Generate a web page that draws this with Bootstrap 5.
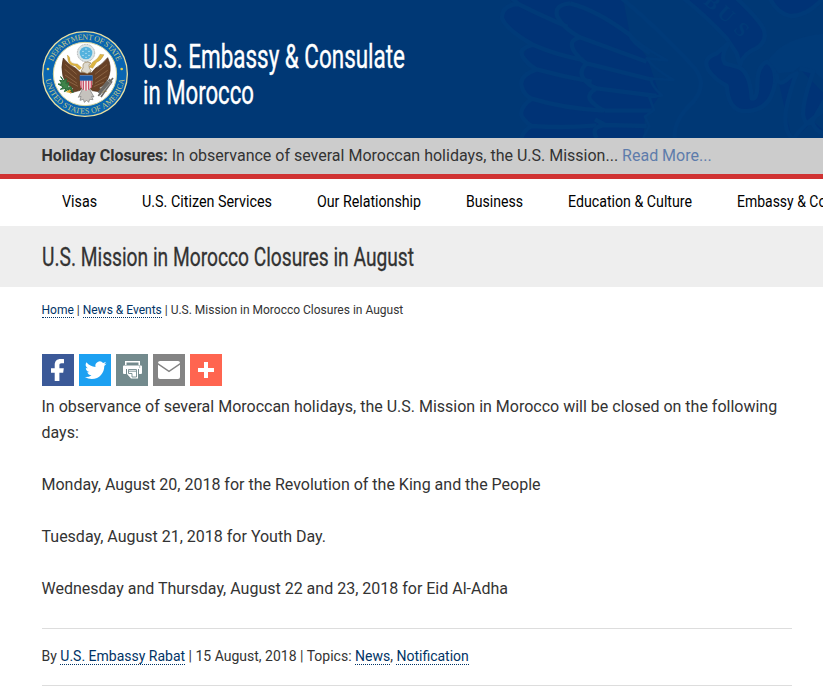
<!DOCTYPE html>
<html lang="en">
<head>
  <meta charset="UTF-8">
  <meta name="viewport" content="width=device-width, initial-scale=1.0">
  <title>U.S. Mission in Morocco Closures in August</title>
  <link rel="stylesheet" href="https://cdn.jsdelivr.net/npm/bootstrap@5.3.0/dist/css/bootstrap.min.css">
  <style>
    body { font-family: Roboto, "Liberation Sans", sans-serif; font-size: 16px; line-height: 26px; color: #333; overflow: hidden; }
    a { color: #036; text-decoration: none; }
    .page-pad { padding-left: 41.5px; padding-right: 31px; }
    .site-header { height: 138px; background: #003875; }
    .crest { right: 0; top: 0; }
    .seal { width: 86px; height: 86px; margin: 10px 14.5px 0 .5px; }
    .site-name { font-size: 33px; line-height: 36px; color: #fff; padding-top: 12px; -webkit-text-stroke: .4px #fff; }
    .fit { display: inline-block; white-space: nowrap; }
    .fit > span { display: inline-block; transform-origin: 0 50%; }
    .alert-bar { height: 41px; background: #ccc; border-bottom: 5px solid #d03232; line-height: 35px; }
    .alert-bar a { color: #5e7cab; }
    .main-menu { height: 47px; padding-left: 61.5px; gap: 45px; line-height: 46px; }
    .main-menu a { color: #000; }
    .title-bar { height: 61px; background: #eee; }
    .title-bar h1 { font-size: 26px; line-height: 63px; font-weight: 400; -webkit-text-stroke: .3px #333; }
    .crumbs { font-size: 12px; line-height: 15px; padding-top: 16px; }
    .dotted { border-bottom: 1px dotted #036; }
    .share { gap: 5px; margin: 36px 0 8px .5px; }
    .share svg { width: 32px; height: 32px; display: block; }
    .article p { margin-bottom: 26px; }
    .byline { font-size: 14px; line-height: 16px; height: 58px; border-top: 1px solid #ddd; border-bottom: 1px solid #ddd; padding-top: 19px; }
  </style>
</head>
<body>
  <header class="site-header page-pad position-relative d-flex align-items-center">
    <svg class="crest position-absolute" width="343" height="138" viewBox="0 0 1029 414" aria-hidden="true">
      <g fill="#003376" stroke="#003a78" stroke-width="13" stroke-linejoin="round">
        <path stroke="none" d="M90 0H430L450 105L500 170L540 285L495 350L490 414H125Q130 390 155 378Q90 350 150 300Q95 250 165 208Q100 165 160 135Q90 90 66 55Q60 20 105 12Z"/>
        <path d="M90 -10L115 12Q65 15 66 55Q80 90 160 135Q112 145 128 170Q145 195 170 208Q120 225 124 255Q130 285 155 296Q115 325 126 350Q140 370 155 378Q130 390 122 420M115 12Q180 45 262 80M160 135Q230 165 310 180M170 208Q250 230 335 245M155 296Q250 325 370 332M155 378Q250 385 350 376" fill="none"/>
        <path d="M270 10Q220 15 232 50Q250 85 300 112Q265 120 280 150Q300 180 320 190Q295 215 310 235Q330 260 350 265Q315 285 335 305Q355 325 375 332M345 358L375 375Q330 380 350 414M270 10Q350 30 450 105Q460 130 510 160M300 112L500 185M320 190L520 240M350 265L530 288M375 332L515 332M375 375L500 378" fill="none"/>
        <path d="M445 95Q465 130 562 181L500 175Q520 205 580 240L512 236Q515 260 546 286L508 292L522 330L495 350L508 378L490 414" fill="none" stroke-width="8"/>
        <path d="M420 -10Q540 90 640 200Q685 250 640 305Q580 360 584 414" fill="none"/>
        <path d="M605 -10Q680 50 740 115L770 160L780 195Q790 160 830 145Q865 120 850 85Q830 50 765 -10"/>
        <path d="M745 130L710 160Q665 175 685 210Q700 235 740 258Q745 325 785 333Q870 340 885 250Q890 200 860 185Q830 200 832 260Q830 300 815 295Q810 210 770 200L735 190Q720 170 745 130Z"/>
        <path d="M867 -10Q890 40 930 48Q980 50 1029 -5V-10Z"/>
        <path d="M1040 100Q910 110 865 180L895 220L940 215L958 200L1000 212L1040 250Z" fill="#003a78" stroke="none"/>
        <path d="M890 220Q890 270 930 230L950 220Q930 270 918 330Q910 390 935 414M958 205L1000 215Q965 310 970 350Q980 385 1000 360L1040 290M1040 325Q960 380 940 420M995 360Q1005 400 1040 400"/>
      </g>
      <g fill="#003a78" font-family="Liberation Serif, serif" font-size="62" font-weight="bold">
        <text transform="translate(668 8) rotate(40)">B</text>
        <text transform="translate(708 43) rotate(42)">U</text>
        <text transform="translate(758 90) rotate(46)">S</text>
      </g>
    </svg>
    <svg class="seal position-relative flex-shrink-0" viewBox="36 33 258 258" role="img" aria-label="Department of State seal">
      <defs>
        <path id="arcTop" d="M62 162A103 103 0 0 1 268 162"/>
        <path id="arcBottom" d="M46 162A119 119 0 0 0 284 162"/>
      </defs>
      <circle cx="165" cy="162" r="127" fill="#0965b1" stroke="#e9dfa0" stroke-width="4"/>
      <circle cx="165" cy="162" r="95" fill="#fff" stroke="#d5d39c" stroke-width="3"/>
      <g fill="#c8ca87" font-family="Liberation Serif, serif" font-size="24" text-anchor="middle">
        <text><textPath href="#arcTop" startOffset="50%" textLength="248">DEPARTMENT OF STATE</textPath></text>
        <text><textPath href="#arcBottom" startOffset="50%" textLength="342">UNITED STATES OF AMERICA</textPath></text>
      </g>
      <circle cx="54" cy="147" r="4" fill="#e4ce50"/><circle cx="275" cy="147" r="4" fill="#e4ce50"/>
      <!-- glory -->
      <circle cx="168" cy="99" r="26" fill="#d9e4e6" stroke="#aaa" stroke-width="3" stroke-dasharray="3 2"/>
      <circle cx="168" cy="99" r="19" fill="#55b2dd"/>
      <g fill="#d9f0fa"><circle cx="168" cy="87" r="2"/><circle cx="159" cy="94" r="2"/><circle cx="177" cy="94" r="2"/><circle cx="168" cy="100" r="2"/><circle cx="159" cy="106" r="2"/><circle cx="177" cy="106" r="2"/><circle cx="168" cy="112" r="2"/></g>
      <!-- tail, wings and head -->
      <path d="M157 208L145 232L153 229L150 241L160 238L163 247L170 241L176 247L179 238L189 239L185 229L192 231L179 208Z" fill="#c5c2bd" stroke="#777" stroke-width="2"/>
      <path d="M100 114Q92 142 99 169Q107 194 132 207L115 210L120 219L151 211L166 193L187 212L218 217L221 209L206 205Q232 190 238 164Q245 139 233 113Q215 135 196 145L185 158H151L137 145Q115 135 100 114Z" fill="#674126" stroke="#4b301d" stroke-width="2"/>
      <path d="M106 133L140 163M104 148L139 177M105 165L141 190M112 182L144 199M231 134L195 163M233 151L195 178M230 169L195 190M222 186L191 200" stroke="#9b7451" stroke-width="2" fill="none"/>
      <path d="M159 133Q164 125 173 126L183 129L177 134Q176 146 184 153L172 161L153 154Q162 144 159 133Z" fill="#ddd9ce" stroke="#937c52" stroke-width="2"/>
      <path d="M112 105Q121 110 120 122Q125 132 142 132L155 143L148 150L135 137Q116 137 114 120ZM222 104Q214 121 200 127L188 145L178 141L188 126Q206 116 210 103Z" fill="#ddb541" stroke="#a78336"/>
      <path d="M150 166H187V193Q185 207 168 213Q152 207 150 193Z" fill="#f3e9e8"/>
      <path d="M153 181V204M160 181V209M168 181V212M176 181V209M184 181V203" stroke="#cb5268" stroke-width="4"/>
      <path d="M149 166H188V182H149Z" fill="#1d5aa2"/>
      <path d="M126 208L112 215L124 218M211 207L226 214L213 217" stroke="#e3b537" stroke-width="4" fill="none"/>
      <!-- olive branch and arrows -->
      <path d="M92 170L101 183L89 181L96 192L84 192L100 201L91 208L108 205L103 215L120 206L129 218L122 199L113 205L116 187L108 192L109 176L101 183Z" fill="#3f844a" stroke="#286b37" stroke-width="3"/>
      <path d="M205 228L240 177M213 231L246 184M205 218L233 182M209 224L249 174" stroke="#6b6864" stroke-width="5"/>
      <path d="M216 218L240 190M230 180L247 193" stroke="#aaa" stroke-width="2"/>
    </svg>
    <div class="site-name position-relative">
      <div class="fit" data-fit="262"><span>U.S. Embassy &amp; Consulate</span></div><br>
      <div class="fit" data-fit="111"><span>in Morocco</span></div>
    </div>
  </header>

  <div class="alert-bar page-pad text-nowrap"><b>Holiday Closures:</b> In observance of several Moroccan holidays, the U.S. Mission... <a href="#">Read More...</a></div>

  <nav class="main-menu d-flex flex-nowrap overflow-hidden">
    <a href="#" class="fit flex-shrink-0" data-fit="35"><span>Visas</span></a>
    <a href="#" class="fit flex-shrink-0" data-fit="130"><span>U.S. Citizen Services</span></a>
    <a href="#" class="fit flex-shrink-0" data-fit="104"><span>Our Relationship</span></a>
    <a href="#" class="fit flex-shrink-0" data-fit="57"><span>Business</span></a>
    <a href="#" class="fit flex-shrink-0" data-fit="124"><span>Education &amp; Culture</span></a>
    <a href="#" class="fit flex-shrink-0" data-fit="135"><span>Embassy &amp; Consulate</span></a>
  </nav>

  <div class="title-bar page-pad">
    <h1 class="fit m-0" data-fit="372"><span>U.S. Mission in Morocco Closures in August</span></h1>
  </div>

  <main class="page-pad">
    <div class="crumbs"><a href="#" class="dotted">Home</a> | <a href="#" class="dotted">News &amp; Events</a> | U.S. Mission in Morocco Closures in August</div>

    <div class="share d-flex">
      <a href="#" aria-label="Facebook"><svg viewBox="0 0 32 32"><path fill="#3b5998" d="M0 0h32v32H0z"/><path fill="#fff" d="M22 5.2v4.1h-2.4c-1.9 0-2.2.9-2.2 2.2v2.8h4.4l-.6 4.5h-3.8V27h-4.7v-8.2H9v-4.5h3.7V11c0-3.8 2.3-5.9 5.8-5.9 1.6 0 3 .1 3.5.1z"/></svg></a>
      <a href="#" aria-label="Twitter"><svg viewBox="0 0 32 32"><path fill="#1da1f2" d="M0 0h32v32H0z"/><path fill="#fff" transform="translate(2.3 1.8) scale(.9)" d="M28 8.6a9.9 9.9 0 0 1-2.8.8 4.9 4.9 0 0 0 2.1-2.7c-1 .5-2 1-3.1 1.2a4.9 4.9 0 0 0-8.4 4.5A14 14 0 0 1 5.7 7.2a4.9 4.9 0 0 0 1.5 6.6 4.9 4.9 0 0 1-2.2-.6v.1a4.9 4.9 0 0 0 3.9 4.8 4.9 4.9 0 0 1-2.2.1 4.9 4.9 0 0 0 4.6 3.4A9.9 9.9 0 0 1 4 23.6a13.9 13.9 0 0 0 7.5 2.2c9.1 0 14-7.5 14-14v-.6A10 10 0 0 0 28 8.6z"/></svg></a>
      <a href="#" aria-label="Print"><svg viewBox="0 0 32 32"><path fill="#738a8d" d="M0 0h32v32H0z"/><path fill="#fff" d="M9 7h15v4h-1.5V8.5h-12V11H9zM7 12.5q0-1 1-1h17q1 0 1 1V19q0 1-1 1h-2v-5H10v5H8q-1 0-1-1zM11 14h11v10.5h-7L11 20z"/><path d="M12.5 15.5h8V23H16v-3.5h-3.5zM13 17.2h7M23 13h1.2" fill="none" stroke="#738a8d" stroke-width=".9"/></svg></a>
      <a href="#" aria-label="Email"><svg viewBox="0 0 32 32"><path fill="#848484" d="M0 0h32v32H0z"/><path fill="#fff" d="M5 10.8V23q0 2 2 2h18q2 0 2-2V10.8l-11 7.4zM5 9.1l11 7.4 11-7.4Q27 7 25 7H7Q5 7 5 9.1z"/></svg></a>
      <a href="#" aria-label="More"><svg viewBox="0 0 32 32"><path fill="#ff6550" d="M0 0h32v32H0z"/><path fill="#fff" d="M14 8h4v6h6v4h-6v6h-4v-6H8v-4h6z"/></svg></a>
    </div>

    <div class="article">
      <p>In observance of several Moroccan holidays, the U.S. Mission in Morocco will be closed on the following days:</p>
      <p>Monday, August 20, 2018 for the Revolution of the King and the People</p>
      <p>Tuesday, August 21, 2018 for Youth Day.</p>
      <p>Wednesday and Thursday, August 22 and 23, 2018 for Eid Al-Adha</p>
    </div>

    <div class="byline">By <a href="#" class="dotted">U.S. Embassy Rabat</a> | 15 August, 2018 | Topics: <a href="#" class="dotted">News</a>, <a href="#" class="dotted">Notification</a></div>
  </main>

  <script src="https://cdn.jsdelivr.net/npm/bootstrap@5.3.0/dist/js/bootstrap.bundle.min.js"></script>
  <script>
    // condense the headings and menu labels to their set widths
    document.querySelectorAll('[data-fit]').forEach(el => {
      const label = el.firstElementChild;
      const width = Number(el.dataset.fit);
      const natural = label.getBoundingClientRect().width;
      label.style.transform = `scaleX(${width / natural})`;
      el.style.width = width + 'px';
    });
  </script>
</body>
</html>
